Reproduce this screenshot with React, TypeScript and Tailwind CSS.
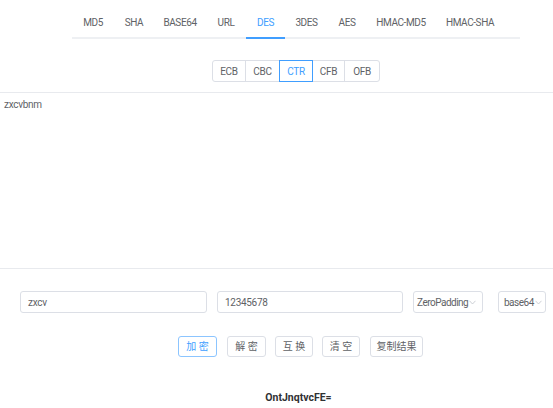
import React from "react";

const tabs: [string, string][] = [
  ["MD5", "w-[42px]"],
  ["SHA", "w-[40px]"],
  ["BASE64", "w-[52px]"],
  ["URL", "w-[40px]"],
  ["DES", "w-[39px]"],
  ["3DES", "w-[43px]"],
  ["AES", "w-[38px]"],
  ["HMAC-MD5", "w-[70px]"],
  ["HMAC-SHA", "w-[68px]"],
];
const modes: [string, string][] = [
  ["ECB", "w-[34px]"],
  ["CBC", "w-[35px]"],
  ["CTR", "w-[34px]"],
  ["CFB", "w-[33px]"],
  ["OFB", "w-[36px]"],
];
const btns: [string, string][] = [
  ["加 密", "w-[39px] border-[#8cc5ff] text-[#409eff]"],
  ["解 密", "w-[39px] border-[#dcdfe6] text-[#606266]"],
  ["互 换", "w-[38px] border-[#dcdfe6] text-[#606266]"],
  ["清 空", "w-[38px] border-[#dcdfe6] text-[#606266]"],
  ["复制结果", "w-[53px] border-[#dcdfe6] text-[#606266]"],
];

const font = { fontFamily: 'Roboto, "Noto Sans CJK SC", sans-serif' };

function Arrow() {
  return (
    <svg width="7" height="5" viewBox="0 0 7 5" className="ml-[1px] mt-[1px] shrink-0">
      <path d="M0.5 0.8 L3.5 4 L6.5 0.8" fill="none" stroke="#c0c4cc" strokeWidth="0.8" />
    </svg>
  );
}

export default function App() {
  return (
    <div className="w-[553px] h-[408px] bg-white overflow-hidden text-[#606266]" style={font}>
      <div className="ml-[72px] w-[448px] h-[39px] flex border-b-2 border-[#eef0f3]">
        {tabs.map(([t, w]) => (
          <div
            key={t}
            className={
              "h-[39px] -mb-[2px] shrink-0 whitespace-nowrap flex justify-center items-center text-[10px] tracking-[-0.4px] " +
              w +
              " " +
              (t === "DES" ? "text-[#409eff] border-b-2 border-[#409eff]" : "border-b-2 border-transparent")
            }
          >
            <span className="mt-[8px]">{t}</span>
          </div>
        ))}
      </div>
      <div className="flex mt-[21px] pl-[212px]">
        {modes.map(([m, w], i) => (
          <div
            key={m}
            className={
              "h-[22px] flex items-center justify-center text-[10px] tracking-[-0.3px] border " +
              w +
              " " +
              (m === "CTR" ? "border-[#409eff] text-[#409eff] relative z-10 " : "border-[#dcdfe6] ") +
              (i > 0 ? "-ml-px " : "") +
              (i === 0 ? "rounded-l-[3px] " : "") +
              (i === modes.length - 1 ? "rounded-r-[3px] " : "")
            }
          >
            {m}
          </div>
        ))}
      </div>
      <div className="mt-[10px] h-[177px] border-t border-b border-[#e8eaee] px-[4px] pt-[4px] text-[10px] tracking-[-0.3px]">
        zxcvbnm
      </div>
      <div className="flex items-center mt-[22px] pl-[20px] h-[22px] text-[10px] tracking-[-0.3px]">
        <div className="w-[187px] h-[22px] border border-[#dcdfe6] rounded-[3px] flex items-center px-[7px]">zxcv</div>
        <div className="ml-[10px] w-[186px] h-[22px] border border-[#dcdfe6] rounded-[3px] flex items-center px-[7px]">12345678</div>
        <div className="ml-[10px] w-[70px] h-[22px] border border-[#dcdfe6] rounded-[3px] flex items-center pl-[3px] whitespace-nowrap tracking-[-0.5px]">
          ZeroPadding
          <Arrow />
        </div>
        <div className="ml-[15px] w-[48px] h-[22px] border border-[#dcdfe6] rounded-[3px] flex items-center pl-[5px] whitespace-nowrap tracking-[-0.5px]">
          base64
          <Arrow />
        </div>
      </div>
      <div className="flex mt-[23px] pl-[178px]">
        {btns.map(([b, cls], i) => (
          <div
            key={b}
            className={
              "h-[21px] flex items-center justify-center text-[10px] border rounded-[3px] whitespace-pre " +
              cls +
              (i > 0 ? (i === 2 || i === 3 ? " ml-[9px]" : " ml-[10px]") : "")
            }
          >
            {b}
          </div>
        ))}
      </div>
      <div className="mt-[33px] text-center text-[10.5px] font-bold text-[#303133] pl-[44px]">OntJnqtvcFE=</div>
    </div>
  );
}
